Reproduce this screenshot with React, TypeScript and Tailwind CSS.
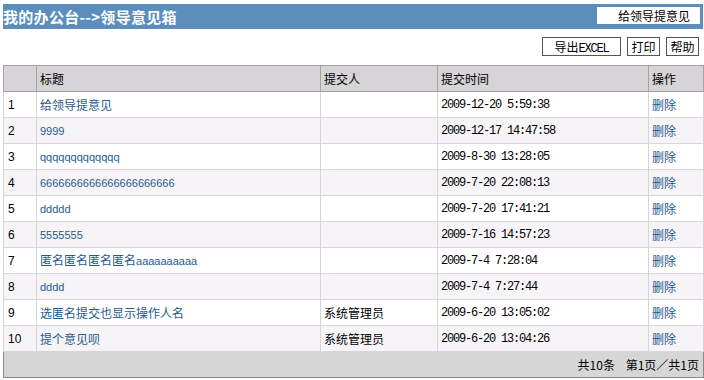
import React from "react";

const rows: { t: string; who: string; time: string }[] = [
  { t: "给领导提意见", who: "", time: "2009-12-20 5:59:38" },
  { t: "9999", who: "", time: "2009-12-17 14:47:58" },
  { t: "qqqqqqqqqqqqq", who: "", time: "2009-8-30 13:28:05" },
  { t: "6666666666666666666666", who: "", time: "2009-7-20 22:08:13" },
  { t: "ddddd", who: "", time: "2009-7-20 17:41:21" },
  { t: "5555555", who: "", time: "2009-7-16 14:57:23" },
  { t: "匿名匿名匿名匿名aaaaaaaaaa", who: "", time: "2009-7-4 7:28:04" },
  { t: "dddd", who: "", time: "2009-7-4 7:27:44" },
  { t: "选匿名提交也显示操作人名", who: "系统管理员", time: "2009-6-20 13:05:02" },
  { t: "提个意见呗", who: "系统管理员", time: "2009-6-20 13:04:26" },
];

const cjk = "'Noto Sans CJK SC', 'Liberation Sans', sans-serif";
const mono = "'Liberation Mono', 'Noto Sans CJK SC', monospace";

function Mixed({ text }: { text: string }) {
  const parts = text.split(/([\x00-\x7f]+)/).filter((p) => p.length > 0);
  return (
    <>
      {parts.map((p, i) =>
        /^[\x00-\x7f]+$/.test(p) ? (
          <span key={i} className="text-[11px]" style={{ fontFamily: "'Liberation Sans', sans-serif" }}>
            {p}
          </span>
        ) : (
          <span key={i}>{p}</span>
        )
      )}
    </>
  );
}

export default function App() {
  return (
    <div className="w-[704px] h-[380px] bg-white pt-[4px] pl-[3px] pr-[1px] text-[12px] text-black" style={{ fontFamily: cjk }}>
      <div className="h-[25px] bg-[#5b8ebd] flex items-start justify-between">
        <div className="text-white font-bold text-[15px] leading-[25px] tracking-[0.3px]">我的办公台--&gt;领导意见箱</div>
        <div className="mt-[3px] mr-[3px] w-[103px] h-[17px] bg-white text-black text-[12px] leading-[17px] text-right pr-[10px]">给领导提意见</div>
      </div>
      <div className="h-[36px] flex items-start justify-end gap-[6px] pt-[8px] pr-[4px]">
        <div className="h-[19px] w-[79px] border border-[#555] bg-white text-[12px] leading-[17px] text-center">
          导出<span style={{ fontFamily: mono }} className="tracking-[-1.2px]">EXCEL</span>
        </div>
        <div className="h-[19px] w-[33px] border border-[#555] bg-white leading-[17px] text-center">打印</div>
        <div className="h-[19px] w-[33px] border border-[#555] bg-white leading-[17px] text-center">帮助</div>
      </div>
      <table className="w-[700px] border-collapse table-fixed border border-[#8a8a8a]">
        <colgroup>
          <col className="w-[33px]" />
          <col className="w-[284px]" />
          <col className="w-[117px]" />
          <col className="w-[211px]" />
          <col className="w-[55px]" />
        </colgroup>
        <thead>
          <tr className="h-[26px] bg-[#d6d4d6]">
            <th className="border border-[#a3a3a3] text-left font-normal pl-[3px]"></th>
            <th className="border border-[#a3a3a3] text-left font-normal pl-[3px]">标题</th>
            <th className="border border-[#a3a3a3] text-left font-normal pl-[3px]">提交人</th>
            <th className="border border-[#a3a3a3] text-left font-normal pl-[3px]">提交时间</th>
            <th className="border border-[#a3a3a3] text-left font-normal pl-[3px]">操作</th>
          </tr>
        </thead>
        <tbody>
          {rows.map((r, i) => (
            <tr key={i} className={i % 2 === 0 ? "h-[26px] bg-white" : "h-[26px] bg-[#f6f4f6]"}>
              <td className="border border-[#d6d6d6] pl-[4px] text-[12px]" style={{ fontFamily: "'Liberation Sans', sans-serif" }}>{i + 1}</td>
              <td className="border border-[#d6d6d6] pl-[3px] text-[#1f5b8e] whitespace-nowrap">
                <Mixed text={r.t} />
              </td>
              <td className="border border-[#d6d6d6] pl-[3px]">{r.who}</td>
              <td className="border border-[#d6d6d6] pl-[3px] tracking-[-1.2px]" style={{ fontFamily: mono }}>{r.time}</td>
              <td className="border border-[#d6d6d6] pl-[3px] text-[#1f5b8e]">删除</td>
            </tr>
          ))}
          <tr className="h-[26px] bg-[#d6d6d6]">
            <td colSpan={5} className="border border-[#8a8a8a] text-right pr-[4px]">
              共10条&nbsp;&nbsp;&nbsp;&nbsp;第1页／共1页
            </td>
          </tr>
        </tbody>
      </table>
    </div>
  );
}
